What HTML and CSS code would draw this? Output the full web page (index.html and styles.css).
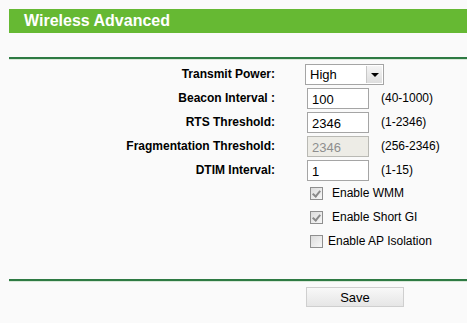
FILE: index.html
```html
<!DOCTYPE html>
<html lang="en">
<head>
    <meta charset="UTF-8">
    <title>Wireless Advanced</title>
    <link rel="stylesheet" href="styles.css">
</head>
<body>

<div class="page">
  <div class="title">Wireless Advanced</div>
  <div class="rule"></div>

  <div class="form">
    <label class="lbl">Transmit Power:</label>
    <div class="ctl">
      <div class="select">
        <span class="value">High</span>
        <span class="arrow"></span>
      </div>
    </div>
    <div class="hint"></div>

    <label class="lbl">Beacon Interval :</label>
    <div class="ctl"><input type="text" class="box" value="100"></div>
    <div class="hint">(40-1000)</div>

    <label class="lbl">RTS Threshold:</label>
    <div class="ctl"><input type="text" class="box" value="2346"></div>
    <div class="hint">(1-2346)</div>

    <label class="lbl">Fragmentation Threshold:</label>
    <div class="ctl"><input type="text" class="box" value="2346" disabled></div>
    <div class="hint">(256-2346)</div>

    <label class="lbl">DTIM Interval:</label>
    <div class="ctl"><input type="text" class="box" value="1"></div>
    <div class="hint">(1-15)</div>

    <div class="check wide"><span class="cb on"></span><span class="ct">Enable WMM</span></div>
    <div class="check wide"><span class="cb on"></span><span class="ct">Enable Short GI</span></div>
    <div class="check"><span class="cb"></span><span class="ct">Enable AP Isolation</span></div>
  </div>

  <div class="rule bottom"></div>

  <div class="actions">
    <button class="save">Save</button>
  </div>
</div>

</body>
</html>
```

FILE: styles.css
```css
body {
	margin: 0;
	background: #fafafa;
	font-family: "Liberation Sans", Arial, sans-serif;
	font-size: 12px;
	color: #000;
}
.page {
	padding: 9px 0 0 9px;
}

/* green heading bar */
.title {
	height: 24px;
	line-height: 24px;
	background: #66b933;
	color: #fff;
	font-size: 16px;
	font-weight: bold;
	padding-left: 15px;
}

/* dark green separator */
.rule {
	margin-top: 24px;
	height: 1px;
	border-top: 2px solid #2e7a43;
	background: #d8e8d8;
}
.rule.bottom {
	margin-top: 23px;
}

.form {
	display: grid;
	grid-template-columns: 266px 76px auto;
	column-gap: 30px;
	grid-auto-rows: 24px;
	margin-top: 4px;
}
.lbl {
	font-weight: bold;
	text-align: right;
	height: 21px;
	line-height: 21px;
}
.ctl {
	height: 21px;
}
.hint {
	height: 21px;
	line-height: 21px;
	margin-left: -30px;
	white-space: nowrap;
}

.select {
	width: 77px;
	height: 19px;
	border: 1px solid #a5a5a5;
	background: #fff;
	display: flex;
	align-items: center;
	justify-content: space-between;
	font-size: 13px;
}
.select .value {
	padding-left: 4px;
}
.select .arrow {
	width: 15px;
	height: 17px;
	margin-right: 1px;
	background: linear-gradient(#f4f4f4, #dedede);
	border-left: 1px solid #c8c8c8;
	position: relative;
}
.select .arrow::after {
	content: "";
	position: absolute;
	left: 4px;
	top: 7px;
	border-width: 4px 4px 0 4px;
	border-style: solid;
	border-color: #000 transparent transparent transparent;
}

.box {
	box-sizing: border-box;
	margin: 0 0 0 2px;
	width: 62px;
	height: 21px;
	border: 1px solid #a5a5a5;
	padding: 1px 4px 0;
	font-family: "Liberation Sans", Arial, sans-serif;
	font-size: 13px;
	color: #000;
	background: #fff;
}
.box:disabled {
	background: #edece6;
	color: #8e8e8e;
	border-color: #b9b9b4;
}

.check {
	grid-column: 2 / 4;
	display: flex;
	align-items: flex-start;
	height: 24px;
	box-sizing: border-box;
	padding: 3px 0 0 5px;
	line-height: 13px;
	white-space: nowrap;
}
.cb {
	box-sizing: border-box;
	width: 13px;
	height: 13px;
	border: 1px solid #8f8f8f;
	background: linear-gradient(135deg, #dcdcdc, #f7f7f7);
	position: relative;
	margin-right: 5px;
}
.check.wide .cb {
	margin-right: 9px;
}
.cb.on::after {
	content: "";
	position: absolute;
	left: 3px;
	top: 1px;
	width: 3px;
	height: 6px;
	border: solid #8a8a8a;
	border-width: 0 2px 2px 0;
	transform: rotate(40deg);
}

.actions {
	padding: 5px 0 0 297px;
}
.save {
	width: 98px;
	height: 20px;
	border: 1px solid #cfcfcf;
	background: linear-gradient(#f8f8f8, #e6e6e6);
	font-family: "Liberation Sans", Arial, sans-serif;
	font-size: 13px;
	color: #000;
	padding: 0;
}
```
